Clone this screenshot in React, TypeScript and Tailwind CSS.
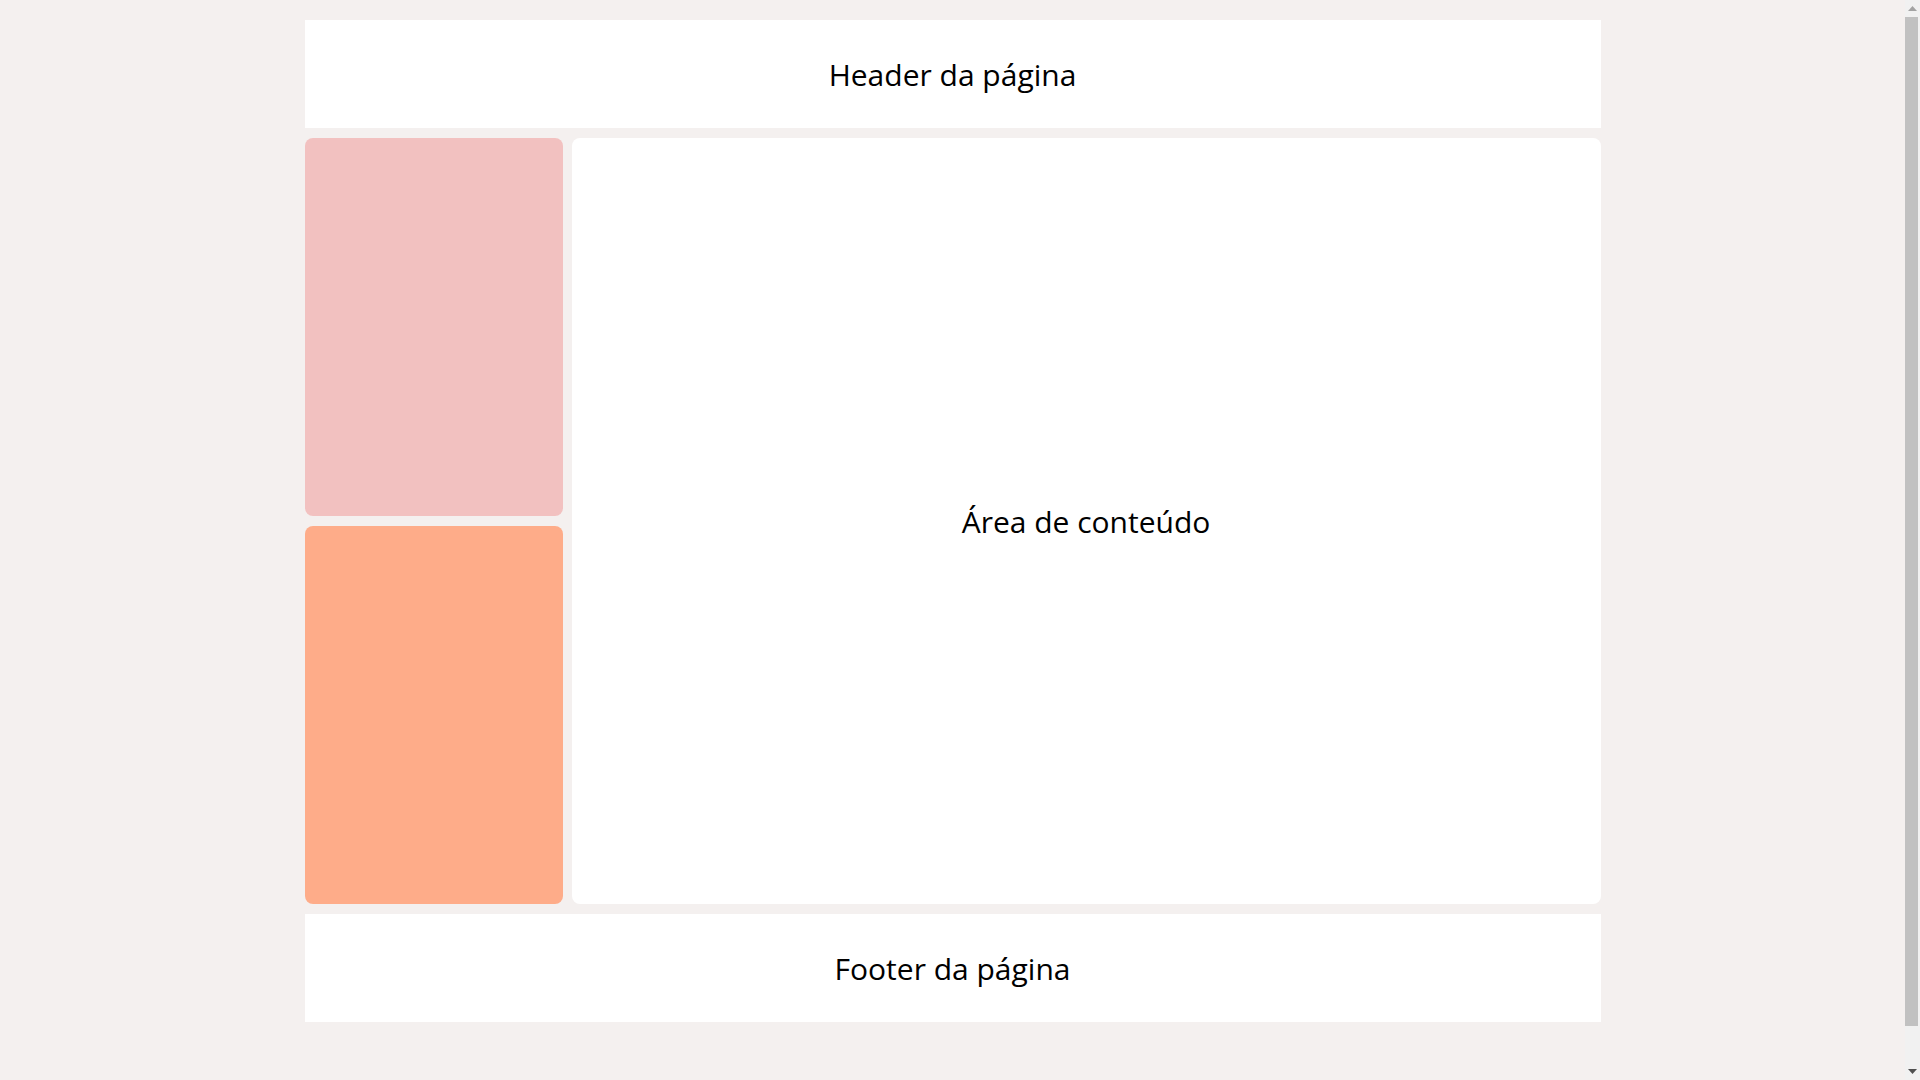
export default function App() {
  const font = { fontFamily: '"Open Sans", "Noto Sans", sans-serif' };
  return (
    <div className="h-screen flex overflow-hidden bg-[#f4f0ef]" style={font}>
      <div className="flex-1 pt-[20px]">
        <div className="w-[1296px] mx-auto flex flex-col gap-[10px] text-black">
          <header className="h-[108px] bg-white flex items-center justify-center">
            <span className="text-[30px]">Header da página</span>
          </header>
          <div className="flex gap-[9px] h-[766px]">
            <aside className="w-[258px] flex flex-col gap-[10px]">
              <div className="flex-1 rounded-lg bg-[#f2c1c0]" />
              <div className="flex-1 rounded-lg bg-[#feac89]" />
            </aside>
            <main className="flex-1 rounded-lg bg-white flex items-center justify-center">
              <span className="text-[30px]">Área de conteúdo</span>
            </main>
          </div>
          <footer className="h-[108px] bg-white flex items-center justify-center">
            <span className="text-[30px]">Footer da página</span>
          </footer>
        </div>
      </div>
      <div className="w-[15px] bg-[#f1f1f1] flex flex-col">
        <div className="h-[17px] flex items-center justify-center">
          <svg width="9" height="5" viewBox="0 0 9 5"><polygon points="4.5,0 9,5 0,5" fill="#a3a3a3" /></svg>
        </div>
        <div className="w-[13px] h-[1009px] bg-[#c1c1c1]" />
        <div className="mt-auto h-[17px] flex items-center justify-center">
          <svg width="9" height="5" viewBox="0 0 9 5"><polygon points="0,0 9,0 4.5,5" fill="#505050" /></svg>
        </div>
      </div>
    </div>
  );
}
